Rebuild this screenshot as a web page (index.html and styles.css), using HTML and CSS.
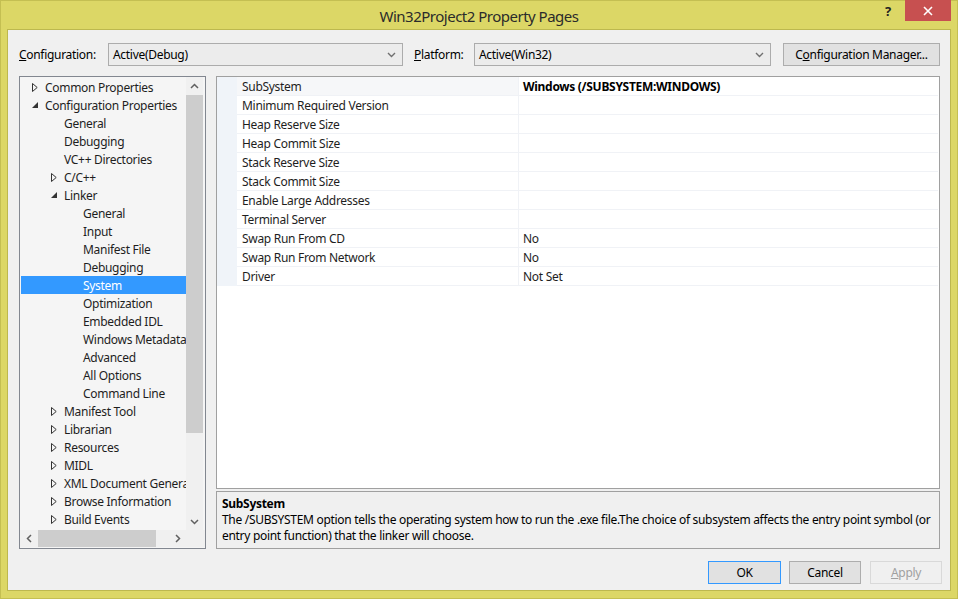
FILE: index.html
```html
<!DOCTYPE html>
<html>
<head>
<meta charset="utf-8">
<link rel="stylesheet" href="styles.css">
</head>
<body>
<div class="window">
  <div class="titlebar">
    <div class="title">Win32Project2 Property Pages</div>
    <div class="help">?</div>
    <div class="close"><svg width="10" height="10" viewBox="0 0 10 10"><path d="M1 1 L9 9 M9 1 L1 9" stroke="#fff" stroke-width="1.6"/></svg></div>
  </div>
  <div class="client">
    <div class="toolbar">
      <label class="lbl lbl-config"><u>C</u>onfiguration:</label>
      <div class="combo combo-config"><span>Active(Debug)</span><svg class="chev" width="9" height="6" viewBox="0 0 9 6"><path d="M1 1 L4.5 4.5 L8 1" stroke="#707070" stroke-width="1.4" fill="none"/></svg></div>
      <label class="lbl lbl-platform"><u>P</u>latform:</label>
      <div class="combo combo-platform"><span>Active(Win32)</span><svg class="chev" width="9" height="6" viewBox="0 0 9 6"><path d="M1 1 L4.5 4.5 L8 1" stroke="#707070" stroke-width="1.4" fill="none"/></svg></div>
      <div class="btn btn-manager">C<u>o</u>nfiguration Manager...</div>
    </div>
    <div class="main">
      <div class="tree">
        <div class="tree-top">
          <div class="rows">
            <div class="node l0"><span class="tw"><svg width="6" height="9" viewBox="0 0 6 9"><path d="M0.5 0.5 L5.2 4.5 L0.5 8.5 Z" fill="none" stroke="#333"/></svg></span>Common Properties</div>
            <div class="node l0"><span class="tw"><svg width="6" height="6" viewBox="0 0 6 6"><path d="M6 0 L6 6 L0 6 Z" fill="#333"/></svg></span>Configuration Properties</div>
            <div class="node l1"><span class="tw"></span>General</div>
            <div class="node l1"><span class="tw"></span>Debugging</div>
            <div class="node l1"><span class="tw"></span>VC++ Directories</div>
            <div class="node l1"><span class="tw"><svg width="6" height="9" viewBox="0 0 6 9"><path d="M0.5 0.5 L5.2 4.5 L0.5 8.5 Z" fill="none" stroke="#333"/></svg></span>C/C++</div>
            <div class="node l1"><span class="tw"><svg width="6" height="6" viewBox="0 0 6 6"><path d="M6 0 L6 6 L0 6 Z" fill="#333"/></svg></span>Linker</div>
            <div class="node l2"><span class="tw"></span>General</div>
            <div class="node l2"><span class="tw"></span>Input</div>
            <div class="node l2"><span class="tw"></span>Manifest File</div>
            <div class="node l2"><span class="tw"></span>Debugging</div>
            <div class="node l2 selected"><span class="tw"></span>System</div>
            <div class="node l2"><span class="tw"></span>Optimization</div>
            <div class="node l2"><span class="tw"></span>Embedded IDL</div>
            <div class="node l2"><span class="tw"></span>Windows Metadata</div>
            <div class="node l2"><span class="tw"></span>Advanced</div>
            <div class="node l2"><span class="tw"></span>All Options</div>
            <div class="node l2"><span class="tw"></span>Command Line</div>
            <div class="node l1"><span class="tw"><svg width="6" height="9" viewBox="0 0 6 9"><path d="M0.5 0.5 L5.2 4.5 L0.5 8.5 Z" fill="none" stroke="#333"/></svg></span>Manifest Tool</div>
            <div class="node l1"><span class="tw"><svg width="6" height="9" viewBox="0 0 6 9"><path d="M0.5 0.5 L5.2 4.5 L0.5 8.5 Z" fill="none" stroke="#333"/></svg></span>Librarian</div>
            <div class="node l1"><span class="tw"><svg width="6" height="9" viewBox="0 0 6 9"><path d="M0.5 0.5 L5.2 4.5 L0.5 8.5 Z" fill="none" stroke="#333"/></svg></span>Resources</div>
            <div class="node l1"><span class="tw"><svg width="6" height="9" viewBox="0 0 6 9"><path d="M0.5 0.5 L5.2 4.5 L0.5 8.5 Z" fill="none" stroke="#333"/></svg></span>MIDL</div>
            <div class="node l1"><span class="tw"><svg width="6" height="9" viewBox="0 0 6 9"><path d="M0.5 0.5 L5.2 4.5 L0.5 8.5 Z" fill="none" stroke="#333"/></svg></span>XML Document Generator</div>
            <div class="node l1"><span class="tw"><svg width="6" height="9" viewBox="0 0 6 9"><path d="M0.5 0.5 L5.2 4.5 L0.5 8.5 Z" fill="none" stroke="#333"/></svg></span>Browse Information</div>
            <div class="node l1"><span class="tw"><svg width="6" height="9" viewBox="0 0 6 9"><path d="M0.5 0.5 L5.2 4.5 L0.5 8.5 Z" fill="none" stroke="#333"/></svg></span>Build Events</div>
          </div>
          <div class="vscroll">
            <div class="sbtn"><svg width="9" height="6" viewBox="0 0 9 6"><path d="M1 5 L4.5 1.5 L8 5" stroke="#606060" stroke-width="1.5" fill="none"/></svg></div>
            <div class="vtrack"><div class="vthumb"></div></div>
            <div class="sbtn"><svg width="9" height="6" viewBox="0 0 9 6"><path d="M1 1 L4.5 4.5 L8 1" stroke="#606060" stroke-width="1.5" fill="none"/></svg></div>
          </div>
        </div>
        <div class="hscroll">
          <div class="sbtn"><svg width="6" height="9" viewBox="0 0 6 9"><path d="M5 1 L1.5 4.5 L5 8" stroke="#606060" stroke-width="1.5" fill="none"/></svg></div>
          <div class="htrack"><div class="hthumb"></div></div>
          <div class="sbtn"><svg width="6" height="9" viewBox="0 0 6 9"><path d="M1 1 L4.5 4.5 L1 8" stroke="#606060" stroke-width="1.5" fill="none"/></svg></div>
          <div class="corner"></div>
        </div>
      </div>
      <div class="rightcol">
        <div class="grid">
          <div class="prow sel"><div class="gut"></div><div class="pname">SubSystem</div><div class="pval bold">Windows (/SUBSYSTEM:WINDOWS)</div></div>
          <div class="prow"><div class="gut"></div><div class="pname">Minimum Required Version</div><div class="pval"></div></div>
          <div class="prow"><div class="gut"></div><div class="pname">Heap Reserve Size</div><div class="pval"></div></div>
          <div class="prow"><div class="gut"></div><div class="pname">Heap Commit Size</div><div class="pval"></div></div>
          <div class="prow"><div class="gut"></div><div class="pname">Stack Reserve Size</div><div class="pval"></div></div>
          <div class="prow"><div class="gut"></div><div class="pname">Stack Commit Size</div><div class="pval"></div></div>
          <div class="prow"><div class="gut"></div><div class="pname">Enable Large Addresses</div><div class="pval"></div></div>
          <div class="prow"><div class="gut"></div><div class="pname">Terminal Server</div><div class="pval"></div></div>
          <div class="prow"><div class="gut"></div><div class="pname">Swap Run From CD</div><div class="pval">No</div></div>
          <div class="prow"><div class="gut"></div><div class="pname">Swap Run From Network</div><div class="pval">No</div></div>
          <div class="prow"><div class="gut"></div><div class="pname">Driver</div><div class="pval">Not Set</div></div>
        </div>
        <div class="desc">
          <div class="desc-title">SubSystem</div>
          <div class="desc-text">The /SUBSYSTEM option tells the operating system how to run the .exe file.The choice of subsystem affects the entry point symbol (or<br>entry point function) that the linker will choose.</div>
        </div>
      </div>
    </div>
    <div class="buttons">
      <div class="btn btn-ok">OK</div>
      <div class="btn btn-cancel">Cancel</div>
      <div class="btn btn-apply"><u>A</u>pply</div>
    </div>
  </div>
</div>
</body>
</html>
```

FILE: styles.css
```css
* { box-sizing: border-box; }
html, body { margin: 0; padding: 0; }
body {
  width: 958px;
  height: 599px;
  overflow: hidden;
  font-family: "Segoe UI", "Noto Sans", sans-serif;
  font-size: 12px;
  letter-spacing: -0.3px;
  color: #000;
}
.window {
  width: 958px;
  height: 599px;
  background: #dcd766;
  border: 1px solid #c4bf52;
  display: flex;
  flex-direction: column;
}
.titlebar {
  height: 28px;
  position: relative;
  display: flex;
  justify-content: center;
  align-items: center;
}
.title {
  font-size: 15px;
  letter-spacing: -0.5px;
  color: #2b2b2b;
  padding-top: 1px;
}
.help {
  position: absolute;
  left: 884px;
  top: 1px;
  font-size: 13px;
  font-weight: bold;
  color: #222;
}
.close {
  position: absolute;
  left: 904px;
  top: -1px;
  width: 46px;
  height: 21px;
  background: #c75050;
  display: flex;
  align-items: center;
  justify-content: center;
}
.client {
  flex: 1;
  margin: 0 6px 7px 6px;
  background: #f0f0f0;
  border: 1px solid #bdb84e;
  padding: 13px 10px 0 11px;
  display: flex;
  flex-direction: column;
}
.toolbar {
  height: 23px;
  display: flex;
  align-items: center;
}
.lbl { display: block; color: #000; }
.lbl-config { width: 89px; }
.lbl-platform { width: 60px; margin-left: 11px; }
.combo {
  height: 23px;
  border: 1px solid #acacac;
  background: #ececec;
  display: flex;
  align-items: center;
  justify-content: space-between;
  padding: 0 6px 0 4px;
}
.combo-config { width: 295px; }
.combo-platform { width: 297px; }
.btn {
  height: 23px;
  border: 1px solid #adadad;
  background: #e1e1e1;
  display: flex;
  align-items: center;
  justify-content: center;
}
.btn-manager { width: 157px; margin-left: 12px; }
.main {
  height: 473px;
  margin-top: 10px;
  display: flex;
  gap: 10px;
}
.tree {
  width: 187px;
  border: 1px solid #828790;
  background: #f5f5f5;
  display: flex;
  flex-direction: column;
}
.tree-top {
  flex: 1;
  display: flex;
  min-height: 0;
}
.rows {
  width: 166px;
  padding: 1px 0 0 1px;
  overflow: hidden;
}
.node {
  height: 18px;
  display: flex;
  align-items: center;
  white-space: nowrap;
  color: #1e1e1e;
}
.node.l0 { padding-left: 10px; }
.node.l1 { padding-left: 29px; }
.node.l2 { padding-left: 48px; }
.tw {
  width: 14px;
  flex: none;
  display: flex;
  align-items: center;
  padding-left: 1px;
}
.node.selected { background: #3399ff; color: #fff; }
.vscroll {
  width: 17px;
  background: #f0f0f0;
  display: flex;
  flex-direction: column;
}
.sbtn {
  width: 17px;
  height: 17px;
  flex: none;
  display: flex;
  align-items: center;
  justify-content: center;
}
.vtrack { flex: 1; padding: 1px 0 0 0; }
.vthumb { width: 17px; height: 338px; background: #cdcdcd; }
.hscroll {
  height: 17px;
  margin-bottom: 1px;
  background: #f0f0f0;
  display: flex;
}
.htrack { width: 132px; padding-left: 1px; display: flex; align-items: stretch; }
.hthumb { width: 118px; background: #cdcdcd; }
.corner { width: 17px; background: #f0f0f0; margin-left: auto; }
.rightcol {
  width: 724px;
  display: flex;
  flex-direction: column;
  gap: 2px;
}
.grid {
  height: 413px;
  border: 1px solid #a0a0a0;
  background: #fff;
}
.prow {
  height: 19px;
  display: flex;
  margin-right: 1px;
}
.gut { width: 20px; background: #f0f4f9; }
.pname {
  width: 282px;
  padding-left: 5px;
  border-bottom: 1px solid #f0f2f6;
  border-right: 1px solid #f0f2f6;
  display: flex;
  align-items: center;
  color: #1e1e1e;
}
.prow.sel .pname { background: #f6f7f9; }
.pval {
  flex: 1;
  padding-left: 4px;
  border-bottom: 1px solid #f0f2f6;
  display: flex;
  align-items: center;
  color: #1e1e1e;
}
.pval.bold { font-weight: bold; color: #000; }
.desc {
  height: 58px;
  border: 1px solid #a0a0a0;
  background: #f0f0f0;
  padding: 3px 5px 0 5px;
  line-height: 16px;
}
.desc-title { font-weight: bold; line-height: 17px; }
.desc-text { white-space: nowrap; }
.buttons {
  margin-top: 12px;
  margin-right: -2px;
  display: flex;
  justify-content: flex-end;
  gap: 8px;
}
.btn-ok { width: 73px; border-color: #3399ff; }
.btn-cancel { width: 72px; }
.btn-apply { width: 72px; margin-left: 1px; background: #f0f0f0; border-color: #d9d9d9; color: #a0a0a0; }
```
